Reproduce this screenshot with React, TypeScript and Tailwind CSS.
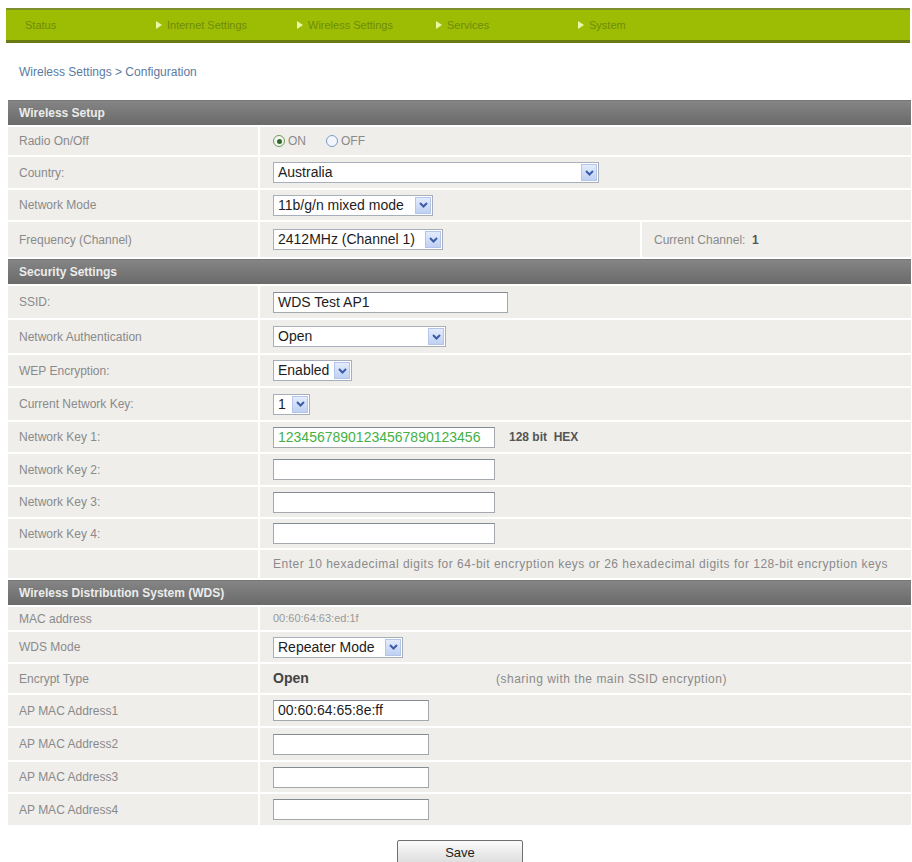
import React from "react";

const Chevron = () => (
  <svg width="9" height="6" viewBox="0 0 9 6">
    <path d="M1 1 L4.5 4.5 L8 1" fill="none" stroke="#3b5ca8" strokeWidth="2" />
  </svg>
);

function Sel({ w, text }: { w: string; text: string }) {
  return (
    <div className={`flex h-[21px] items-stretch border border-[#a7afbb] bg-white ${w}`}>
      <span className="flex-1 pl-[4px] text-[14px] leading-[19px] text-[#1d1d1d] whitespace-nowrap overflow-hidden">{text}</span>
      <span className="w-[16px] m-[1px] flex items-center justify-center border border-[#b3c5ea] bg-gradient-to-b from-[#e4ecfc] to-[#bfd0f2]">
        <Chevron />
      </span>
    </div>
  );
}

function Inp({ w, text, cls }: { w: string; text?: string; cls?: string }) {
  return (
    <div className={`h-[21px] border border-[#a2a8ae] border-t-[#858b92] bg-white pl-[4px] text-[14px] leading-[19px] whitespace-nowrap overflow-hidden ${w} ${cls ?? "text-[#1d1d1d]"}`}>
      {text}
    </div>
  );
}

function Row({ h, label, children }: { h: string; label?: string; children?: React.ReactNode }) {
  return (
    <div className={`flex gap-[2px] ${h}`}>
      <div className="w-[250px] shrink-0 bg-[#efeeea] flex items-center pl-[11px] text-[12px] text-[#8a8a8a]">{label}</div>
      <div className="flex-1 bg-[#efeeea] flex items-center pl-[13px]">{children}</div>
    </div>
  );
}

function Header({ title }: { title: string }) {
  return (
    <div className="h-[25px] flex items-center pl-[11px] bg-gradient-to-b from-[#858585] to-[#6a6a6a] border-t border-[#777] text-[12px] font-bold text-[#ececec]">
      {title}
    </div>
  );
}

const Arrow = () => (
  <svg width="6" height="8" viewBox="0 0 6 8" className="mr-[5px]">
    <path d="M0 0 L6 4 L0 8 Z" fill="#e9f7a8" />
  </svg>
);

export default function App() {
  return (
    <div className="w-[912px] h-[862px] bg-white overflow-hidden pt-[8px] font-['Liberation_Sans',Arial,sans-serif]">
      {/* nav */}
      <div className="ml-[6px] mr-[2px] h-[35px] bg-[#9dbd04] border-t-2 border-t-[#7f8f2e] border-b-[3px] border-b-[#6b7a12] flex items-center pl-[19px] text-[11px] text-[#6f8c08]">
        <div className="w-[131px]">Status</div>
        <div className="w-[141px] flex items-center"><Arrow />Internet Settings</div>
        <div className="w-[139px] flex items-center"><Arrow />Wireless Settings</div>
        <div className="w-[142px] flex items-center"><Arrow />Services</div>
        <div className="flex items-center"><Arrow />System</div>
      </div>

      {/* breadcrumb */}
      <div className="mt-[22px] h-[14px] pl-[19px] text-[12px] leading-[14px] text-[#5b7ba3]">
        Wireless Settings &gt; Configuration
      </div>

      {/* table */}
      <div className="mt-[21px] ml-[8px] w-[903px] flex flex-col gap-[2px]">
        <Header title="Wireless Setup" />
        <Row h="h-[28px]" label="Radio On/Off">
          <div className="flex items-center text-[12px] text-[#8a8a8a]">
            <span className="w-[12px] h-[12px] rounded-full border border-[#6f9a5a] bg-[#f4f8f0] flex items-center justify-center mr-[3px]">
              <span className="w-[5px] h-[5px] rounded-full bg-[#2f6a2a]" />
            </span>
            <span className="mr-[20px]">ON</span>
            <span className="w-[12px] h-[12px] rounded-full border border-[#7a9ccc] bg-[#f2f6fc] mr-[3px]" />
            <span>OFF</span>
          </div>
        </Row>
        <Row h="h-[31px]" label="Country:">
          <Sel w="w-[326px]" text="Australia" />
        </Row>
        <Row h="h-[30px]" label="Network Mode">
          <Sel w="w-[160px]" text="11b/g/n mixed mode" />
        </Row>
        <div className="flex gap-[2px] h-[35px]">
          <div className="w-[250px] shrink-0 bg-[#efeeea] flex items-center pl-[11px] text-[12px] text-[#8a8a8a]">Frequency (Channel)</div>
          <div className="w-[380px] shrink-0 bg-[#efeeea] flex items-center pl-[13px]">
            <Sel w="w-[170px]" text="2412MHz (Channel 1)" />
          </div>
          <div className="flex-1 bg-[#efeeea] flex items-center pl-[12px] text-[12px] text-[#8a8a8a]">
            Current Channel:&nbsp;&nbsp;<b className="text-[#555]">1</b>
          </div>
        </div>

        <Header title="Security Settings" />
        <Row h="h-[32px]" label="SSID:">
          <Inp w="w-[235px]" text="WDS Test AP1" />
        </Row>
        <Row h="h-[33px]" label="Network Authentication">
          <Sel w="w-[173px]" text="Open" />
        </Row>
        <Row h="h-[31px]" label="WEP Encryption:">
          <Sel w="w-[79px]" text="Enabled" />
        </Row>
        <Row h="h-[32px]" label="Current Network Key:">
          <Sel w="w-[37px]" text="1" />
        </Row>
        <Row h="h-[30px]" label="Network Key 1:">
          <Inp w="w-[222px]" text="12345678901234567890123456" cls="text-[#45b045] text-[13px]" />
          <span className="ml-[14px] text-[12px] font-bold text-[#555]">128 bit&nbsp;&nbsp;HEX</span>
        </Row>
        <Row h="h-[31px]" label="Network Key 2:">
          <Inp w="w-[222px]" />
        </Row>
        <Row h="h-[30px]" label="Network Key 3:">
          <Inp w="w-[222px]" />
        </Row>
        <Row h="h-[29px]" label="Network Key 4:">
          <Inp w="w-[222px]" />
        </Row>
        <Row h="h-[28px]" label="">
          <span className="text-[12px] tracking-[0.5px] text-[#8a8a8a] whitespace-nowrap">
            Enter 10 hexadecimal digits for 64-bit encryption keys or 26 hexadecimal digits for 128-bit encryption keys
          </span>
        </Row>

        <Header title="Wireless Distribution System (WDS)" />
        <Row h="h-[23px]" label="MAC address">
          <span className="text-[11px] text-[#999]">00:60:64:63:ed:1f</span>
        </Row>
        <Row h="h-[30px]" label="WDS Mode">
          <Sel w="w-[130px]" text="Repeater Mode" />
        </Row>
        <Row h="h-[29px]" label="Encrypt Type">
          <span className="w-[223px] text-[14px] font-bold text-[#444]">Open</span>
          <span className="text-[12px] tracking-[0.5px] text-[#8a8a8a]">(sharing with the main SSID encryption)</span>
        </Row>
        <Row h="h-[31px]" label="AP MAC Address1">
          <Inp w="w-[156px]" text="00:60:64:65:8e:ff" cls="text-[#1d1d1d] text-[13px]" />
        </Row>
        <Row h="h-[32px]" label="AP MAC Address2">
          <Inp w="w-[156px]" />
        </Row>
        <Row h="h-[30px]" label="AP MAC Address3">
          <Inp w="w-[156px]" />
        </Row>
        <Row h="h-[31px]" label="AP MAC Address4">
          <Inp w="w-[156px]" />
        </Row>
      </div>

      <div className="mt-[15px] pl-[397px]">
        <div className="w-[126px] h-[25px] border border-[#707070] rounded-[2px] bg-gradient-to-b from-[#fbfbfb] to-[#dcdcdc] flex items-center justify-center text-[13px] text-[#222]">
          Save
        </div>
      </div>
    </div>
  );
}
